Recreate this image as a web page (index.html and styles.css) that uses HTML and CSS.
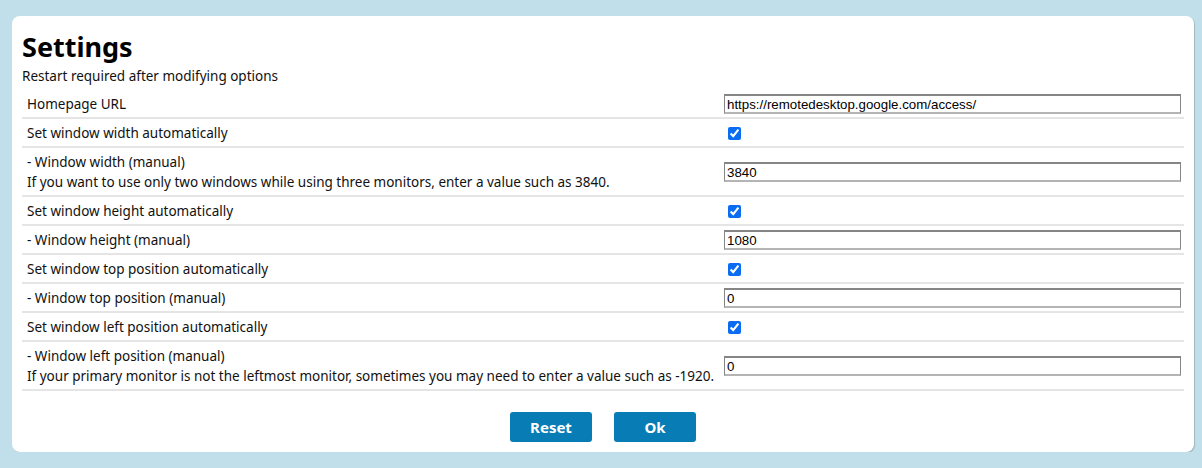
FILE: index.html
```html
<!DOCTYPE html>
<html lang="en">
<head>
    <meta charset="UTF-8">
    <title>Settings</title>
    <link rel="stylesheet" href="styles.css">
</head>
<body>
    <div class="card">
        <h1 class="title">Settings</h1>
        <div class="subtitle">Restart required after modifying options</div>
        <table class="options">
            <tr>
                <td class="label">Homepage URL</td>
                <td class="value"><input type="text" class="field" value="https://remotedesktop.google.com/access/"></td>
            </tr>
            <tr>
                <td class="label">Set window width automatically</td>
                <td class="value"><input type="checkbox" class="check" checked></td>
            </tr>
            <tr>
                <td class="label">- Window width (manual)<br>If you want to use only two windows while using three monitors, enter a value such as 3840.</td>
                <td class="value"><input type="text" class="field" value="3840"></td>
            </tr>
            <tr>
                <td class="label">Set window height automatically</td>
                <td class="value"><input type="checkbox" class="check" checked></td>
            </tr>
            <tr>
                <td class="label">- Window height (manual)</td>
                <td class="value"><input type="text" class="field" value="1080"></td>
            </tr>
            <tr>
                <td class="label">Set window top position automatically</td>
                <td class="value"><input type="checkbox" class="check" checked></td>
            </tr>
            <tr>
                <td class="label">- Window top position (manual)</td>
                <td class="value"><input type="text" class="field" value="0"></td>
            </tr>
            <tr>
                <td class="label">Set window left position automatically</td>
                <td class="value"><input type="checkbox" class="check" checked></td>
            </tr>
            <tr>
                <td class="label">- Window left position (manual)<br>If your primary monitor is not the leftmost monitor, sometimes you may need to enter a value such as -1920.</td>
                <td class="value"><input type="text" class="field" value="0"></td>
            </tr>
        </table>
        <div class="buttons">
            <button class="btn">Reset</button>
            <button class="btn">Ok</button>
        </div>
    </div>
</body>
</html>
```

FILE: styles.css
```css
* {margin: 0;padding: 0;box-sizing: border-box;}

html, body {
    background-color: #c1dfeb;
}
body {
    padding: 16px 8px 0 12px;
    font-family: "Noto Sans", "Open Sans", sans-serif;
    font-size: 13.5px;
    color: #111;
}

.card {
    padding: 10px;
    background-color: #fff;
    border-radius: 8px;
    box-shadow: 1px 1px 1px rgba(0,0,0,0.18);
}

.title {
    margin-top: 4px;
    font-size: 27px;
    line-height: 34px;
    font-weight: 700;
    color: #000;
}
.subtitle {
    margin-top: 2px;
    line-height: 20px;
}

.options {
    width: 100%;
    margin-top: 4px;
    border-collapse: collapse;
}
.options td {
    padding: 4px 3px 3px 5px;
    line-height: 20px;
    border-bottom: 2px solid #e5e5e5;
    vertical-align: middle;
}
.options .label {
    width: 702px;
}
.options .value {
    padding-left: 0;
}

.field {
    display: block;
    width: 100%;
    height: 20px;
    padding: 0 2px;
    font-family: "Liberation Sans", Arial, sans-serif;
    font-size: 13.3px;
    color: #000;
    border-style: solid;
    border-width: 2px 1px 2px 1px;
    border-color: #858585 #858585 #b4b4b4 #858585;
    outline: none;
}
.check {
    display: block;
    width: 13px;
    height: 13px;
    margin: 3px 3px 3px 4px;
    accent-color: #0a6cf0;
}

.buttons {
    display: flex;
    justify-content: center;
    gap: 22px;
    margin-top: 21px;
}
.btn {
    width: 82px;
    height: 30px;
    font-family: "Noto Sans", "Open Sans", sans-serif;
    font-size: 15px;
    font-weight: 700;
    color: #fff;
    background-color: #087db5;
    border: none;
    border-radius: 3px;
}
```
